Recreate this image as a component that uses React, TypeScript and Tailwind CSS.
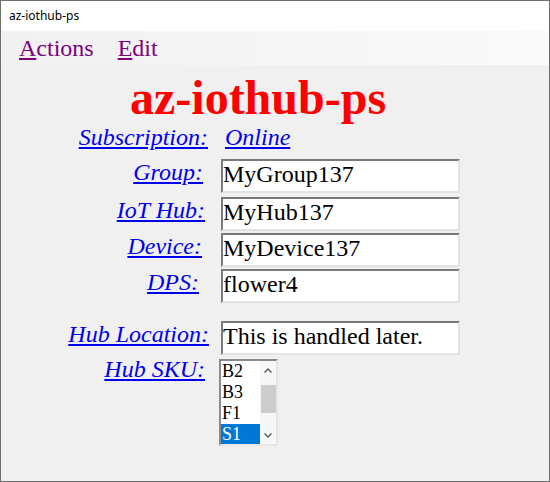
const serif = "font-['Liberation_Serif','Times_New_Roman',serif]";

const labelClass = `${serif} text-[24px] leading-[26px] italic text-[#0000ee] underline`;

const fieldClass = `${serif} box-border h-[34px] w-[239px] border-2 border-t-[#7a7a7a] border-l-[#7a7a7a] border-b-[#e3e3e3] border-r-[#e3e3e3] bg-white pl-0 pr-1 pt-0 pb-[4px] text-[24px] leading-[26px] text-black outline-none`;

const ChevronUp = () => (
  <svg width="8" height="5" viewBox="0 0 8 5" className="block">
    <path d="M0.5 4.5 L4 1 L7.5 4.5" fill="none" stroke="#606060" strokeWidth="1.5" />
  </svg>
);

const ChevronDown = () => (
  <svg width="8" height="5" viewBox="0 0 8 5" className="block">
    <path d="M0.5 0.5 L4 4 L7.5 0.5" fill="none" stroke="#606060" strokeWidth="1.5" />
  </svg>
);

const Row = ({
  label,
  labelMr,
  className = '',
  labelClassName = '',
  children,
}: {
  label: string;
  labelMr: string;
  className?: string;
  labelClassName?: string;
  children: React.ReactNode;
}) => {
  return (
    <div className={`flex items-start ${className}`}>
      <div className={`w-[209px] shrink-0 text-right ${labelClassName}`}>
        <a href="#" className={`${labelClass} ${labelMr}`}>
          {label}
        </a>
      </div>
      <div className="ml-[11px]">{children}</div>
    </div>
  );
};

const SkuList = () => {
  const items = ['B2', 'B3', 'F1', 'S1'];

  return (
    <div className="box-border flex h-[87px] w-[59px] border-2 border-t-[#8a8a8a] border-l-[#8a8a8a] border-b-[#e6e6e6] border-r-[#e6e6e6] bg-white">
      <div className="w-[39px] overflow-hidden">
        {items.map((item) => (
          <div
            key={item}
            className={`${serif} h-[21px] pl-[1px] pt-[1px] text-[18px] leading-[19px] ${
              item === 'S1' ? 'bg-[#0078d7] text-white' : 'text-black'
            }`}
          >
            {item}
          </div>
        ))}
      </div>
      <div className="flex w-[16px] flex-col items-center bg-[#f7f7f7]">
        <div className="flex h-[17px] items-center justify-center pt-[2px]">
          <ChevronUp />
        </div>
        <div className="mt-[7px] h-[28px] w-[15px] bg-[#cdcdcd]" />
        <div className="mt-auto flex h-[17px] items-center justify-center pb-[1px]">
          <ChevronDown />
        </div>
      </div>
    </div>
  );
};

export default function App() {
  return (
    <div className="box-border flex h-[482px] w-[550px] flex-col overflow-hidden border border-[#6e6e6e] bg-[#f0f0f0]">
      {/* title bar */}
      <div className="flex h-[30px] shrink-0 items-center bg-white pl-2 font-['Noto_Sans','Open_Sans',sans-serif] text-[12px] text-black">
        az-iothub-ps
      </div>

      {/* menu bar */}
      <div
        className={`${serif} flex h-[34px] shrink-0 items-center gap-[24px] bg-gradient-to-r from-[#f1f1f1] to-[#fafafa] pl-[18px] text-[24px] leading-[26px] text-[#800080]`}
      >
        <span>
          <span className="underline">A</span>ctions
        </span>
        <span>
          <span className="underline">E</span>dit
        </span>
      </div>

      {/* form */}
      <div className="flex flex-col pt-[6px]">
        <h1 className={`${serif} pl-[129px] text-[48px] leading-[53px] font-bold text-[#ff0000]`}>
          az-iothub-ps
        </h1>

        <Row label="Subscription:" labelMr="mr-[2px]" className="h-[35px]">
          <a href="#" className={`${labelClass} ml-[4px]`}>
            Online
          </a>
        </Row>

        <Row label="Group:" labelMr="mr-[7px]">
          <input className={fieldClass} defaultValue="MyGroup137" />
        </Row>

        <Row label="IoT Hub:" labelMr="mr-[5px]" className="mt-[4px]">
          <input className={fieldClass} defaultValue="MyHub137" />
        </Row>

        <Row label="Device:" labelMr="mr-[8px]" className="mt-[2px]">
          <input className={fieldClass} defaultValue="MyDevice137" />
        </Row>

        <Row label="DPS:" labelMr="mr-[11px]" className="mt-[2px]">
          <input className={fieldClass} defaultValue="flower4" />
        </Row>

        <Row label="Hub Location:" labelMr="mr-[1px]" className="mt-[18px]">
          <input className={fieldClass} defaultValue="This is handled later." />
        </Row>

        <Row
          label="Hub SKU:"
          labelMr="mr-[5px]"
          className="mt-[4px]"
          labelClassName="-mt-[3px]"
        >
          <div className="-ml-[2px]">
            <SkuList />
          </div>
        </Row>
      </div>
    </div>
  );
}
